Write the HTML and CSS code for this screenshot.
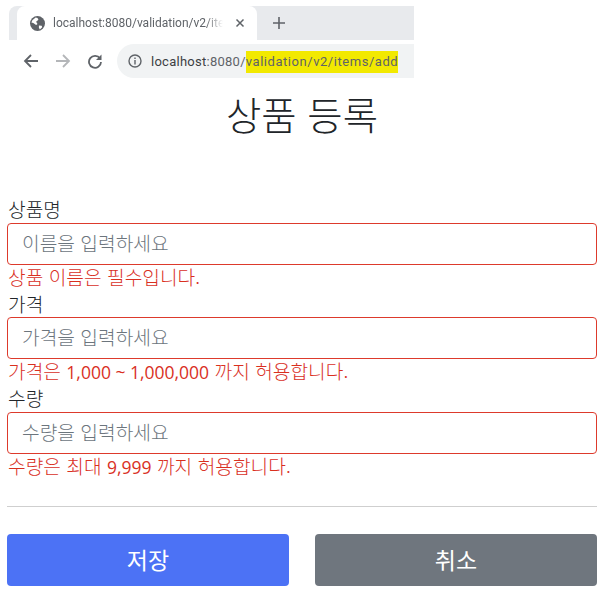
FILE: index.html
```html
<!DOCTYPE html>
<html lang="ko">
<head>
<meta charset="utf-8">
<title>상품 등록</title>
<link rel="stylesheet" href="styles.css">
</head>
<body>
<div class="browser">
  <div class="tabstrip">
    <div class="tab">
      <svg class="globe" viewBox="0 0 16 16" width="15" height="15"><circle cx="8" cy="8" r="8" fill="#5f6368"/><path d="M2.500 4.500 6 1.500l2 .5 1 2-2.500 2 1.500 2.500-1.500 1-3-2-2-.5zM9.500 10l3 .5.500 1.500-2.500 2.500-1-2z" fill="#fff"/></svg>
      <span class="tabtitle">localhost:8080/validation/v2/ite</span>
      <svg class="close" viewBox="0 0 10 10" width="10" height="10"><path d="M1.500 1.500l7 7M8.500 1.500l-7 7" stroke="#5f6368" stroke-width="1.500"/></svg>
    </div>
    <svg class="plus" viewBox="0 0 12 12" width="12" height="12"><path d="M6 0v12M0 6h12" stroke="#5f6368" stroke-width="1.600"/></svg>
  </div>
  <div class="toolbar">
    <svg class="navicon" viewBox="0 0 16 16" width="16" height="16"><path d="M15 8H2.500M8 2 2 8l6 6" fill="none" stroke="#5f6368" stroke-width="1.800"/></svg>
    <svg class="navicon" viewBox="0 0 16 16" width="16" height="16"><path d="M1 8h12.500M8 2l6 6-6 6" fill="none" stroke="#b4b6b9" stroke-width="1.800"/></svg>
    <svg class="navicon" viewBox="0 0 16 16" width="16" height="16"><path d="M13 5.500A6 6 0 1 0 14 9" fill="none" stroke="#5f6368" stroke-width="1.800"/><path d="M14.500 1.500v5.500H9z" fill="#5f6368"/></svg>
    <div class="omnibox">
      <svg class="info" viewBox="0 0 14 14" width="14" height="14"><circle cx="7" cy="7" r="6" fill="none" stroke="#5f6368" stroke-width="1.400"/><path d="M7 6v4.500M7 3.500v1.400" stroke="#5f6368" stroke-width="1.400"/></svg>
      <span class="url"><span class="host">localhost</span>:8080/<mark class="hl">validation/v2/items/add</mark></span>
    </div>
  </div>
</div>
<main class="container">
  <h2 class="title">상품 등록</h2>
  <form class="form">
    <div class="field">
      <label class="label">상품명</label>
      <input class="input" placeholder="이름을 입력하세요">
      <div class="error">상품 이름은 필수입니다.</div>
    </div>
    <div class="field">
      <label class="label">가격</label>
      <input class="input" placeholder="가격을 입력하세요">
      <div class="error">가격은 <span class="num">1,000 ~ 1,000,000</span> 까지 허용합니다.</div>
    </div>
    <div class="field">
      <label class="label">수량</label>
      <input class="input" placeholder="수량을 입력하세요">
      <div class="error">수량은 최대 <span class="num">9,999</span> 까지 허용합니다.</div>
    </div>
    <hr class="rule">
    <div class="actions">
      <button class="btn primary" type="button">저장</button>
      <button class="btn secondary" type="button">취소</button>
    </div>
  </form>
</main>
</body>
</html>
```
FILE: styles.css
```css
* { box-sizing: border-box; }
html, body { margin: 0; padding: 0; background: #fff; overflow: hidden; }
body {
  width: 607px; height: 599px;
  font-family: "Noto Sans CJK KR", sans-serif;
  font-weight: 300;
  color: #212529;
}
.browser { width: 414px; padding-top: 6px; height: 78px; font-family: "Roboto", sans-serif; font-weight: 400; }
.tabstrip {
  margin-left: 9px; height: 34px; background: #e8eaed;
  border-top-left-radius: 8px;
  display: flex; align-items: center;
}
.tab {
  width: 240px; height: 34px; margin-left: 8px; background: #fff;
  border-radius: 8px 8px 0 0;
  display: flex; align-items: center; padding: 0 11px 0 13px;
}
.globe { flex: none; }
.tabtitle {
  width: 170px; margin-left: 8px; font-size: 12px; color: #5f6368;
  white-space: nowrap; overflow: hidden;
  -webkit-mask-image: linear-gradient(90deg, #000 90%, transparent);
  mask-image: linear-gradient(90deg, #000 90%, transparent);
}
.close { flex: none; margin-left: 12px; }
.plus { margin-left: 16px; }
.toolbar { height: 38px; display: flex; align-items: center; padding: 4px 0 0 23px; }
.navicon { flex: none; margin-right: 16px; }
.navicon:nth-child(3) { margin-right: 14px; }
.omnibox {
  flex: 1; height: 34px; background: #f1f3f4;
  border-radius: 17px 0 0 17px;
  display: flex; align-items: center; padding-left: 11px;
}
.info { flex: none; }
.url { margin-left: 9px; padding-top: 1px; font-size: 13px; color: #5f6368; white-space: nowrap; letter-spacing: 0.02em; }
.host { color: #3c4043; }
.hl { display: inline-block; line-height: 22px; background: #f2e900; color: #5f6368; letter-spacing: 0.042em; }
.container { padding: 0 10px 0 7px; }
.title {
  margin: 8px 0 0; height: 54px; text-align: center;
  font-size: 38.4px; font-weight: 300; line-height: 54px; color: #212529;
}
.form { margin-top: 57.3px; }
.field { display: flex; flex-direction: column; }
.label { display: block; font-size: 19.2px; line-height: 24px; height: 25.5px; padding-left: 1px; }
.input {
  display: block; width: 100%; height: 42px;
  border: 1px solid #dd3a2c; border-radius: 4px;
  padding: 0 14px 2px; font: inherit; font-size: 19.2px; color: #495057; outline: none;
  background: #fff;
}
.input::placeholder { color: #6c757d; opacity: 1; }
.error { font-size: 19.2px; line-height: 25px; height: 27px; padding-left: 1px; color: #d9301f; white-space: nowrap; }
.num { font-size: 17.5px; font-family: "Open Sans", "Noto Sans CJK KR", sans-serif; font-weight: 400; }
.rule { border: 0; border-top: 1px solid #cfcfcf; margin: 25px 0 27px; }
.actions { display: grid; grid-template-columns: 1fr 1fr; column-gap: 26px; }
.btn {
  height: 52px; border: 0; border-radius: 4px; padding: 0 0 2px;
  font: inherit; font-weight: 400; font-size: 23px; color: #fff;
}
.primary { background: #4c72f5; }
.secondary { background: #6f767e; }
```
